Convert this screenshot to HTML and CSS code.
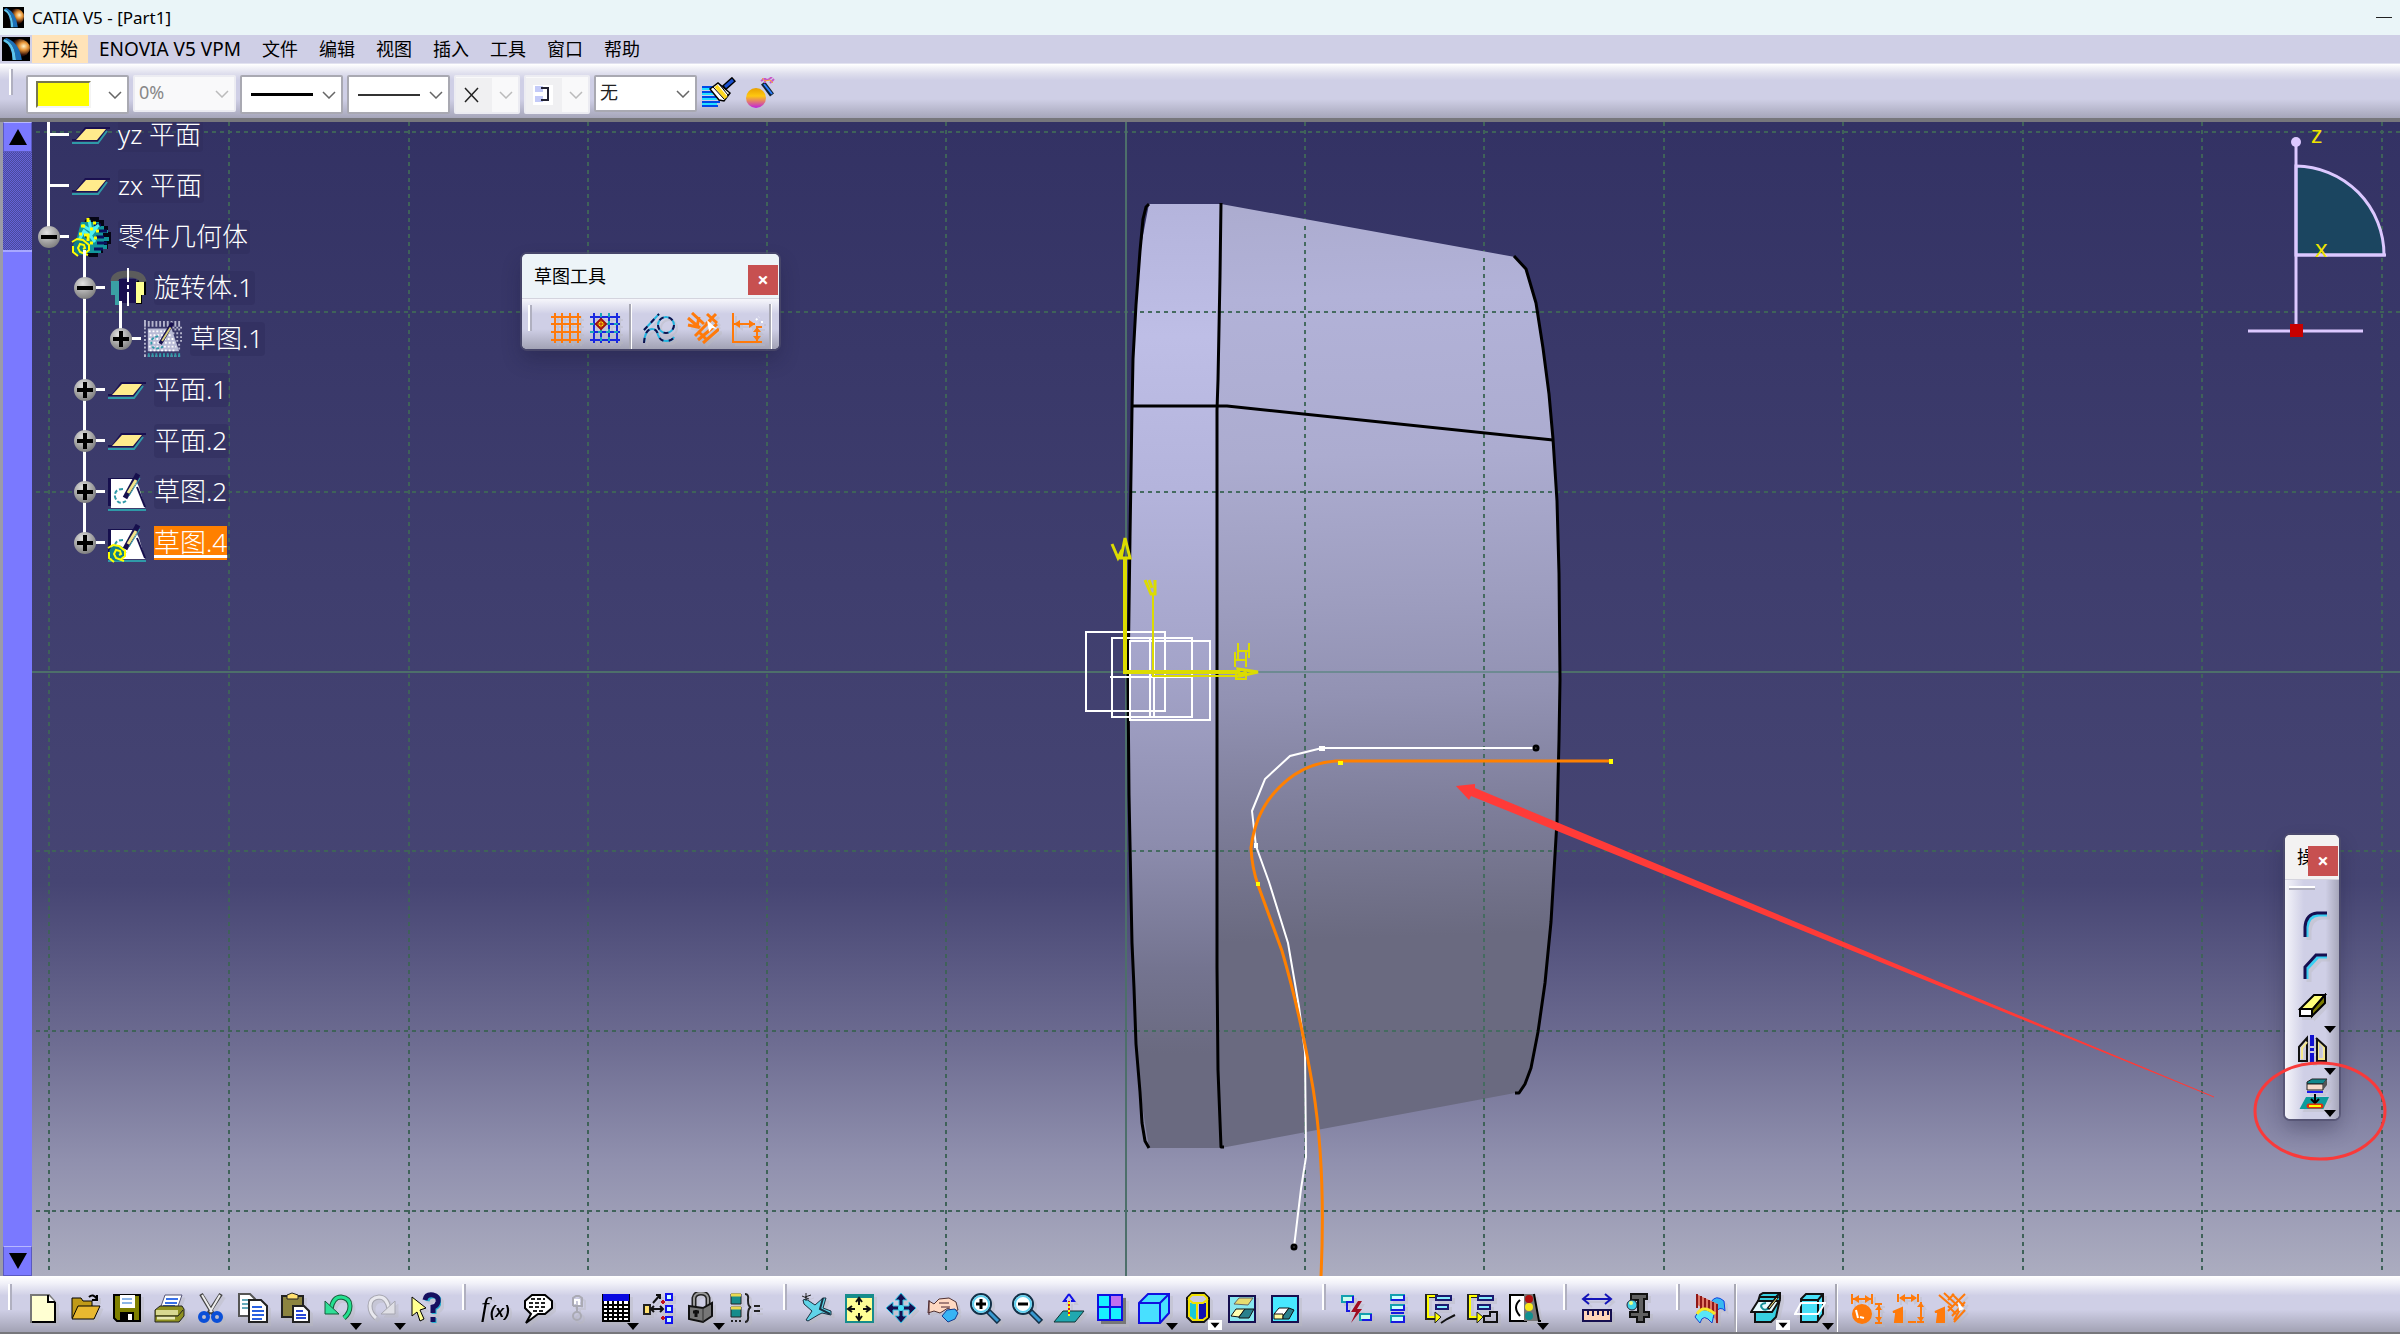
FILE: index.html
```html
<!DOCTYPE html>
<html lang="zh-CN">
<head>
<meta charset="utf-8">
<title>CATIA V5 - [Part1]</title>
<link rel="stylesheet" href="styles.css">
</head>
<body>
<svg class="defs" aria-hidden="true">
  <defs>
    <radialGradient id="flare" cx=".7" cy=".4" r=".6"><stop offset="0" stop-color="#fff3c8"/><stop offset=".35" stop-color="#e8973a"/><stop offset=".8" stop-color="#3a1408"/><stop offset="1" stop-color="#050510"/></radialGradient>
    <linearGradient id="orb" x2="0" y2="1"><stop offset="0" stop-color="#e8a000"/><stop offset=".4" stop-color="#ffc810"/><stop offset="1" stop-color="#c020e0"/></linearGradient>
    <linearGradient id="band" gradientUnits="userSpaceOnUse" x1="0" y1="204" x2="0" y2="1148"><stop offset="0" stop-color="#b4b4dc"/><stop offset=".14" stop-color="#bebee6"/><stop offset=".3" stop-color="#b4b4dc"/><stop offset=".5" stop-color="#a3a3c8"/><stop offset=".68" stop-color="#8c8cad"/><stop offset=".81" stop-color="#747490"/><stop offset=".9" stop-color="#6a6a80"/><stop offset="1" stop-color="#6a6a80"/></linearGradient>
    <linearGradient id="cone" gradientUnits="userSpaceOnUse" x1="0" y1="220" x2="30" y2="1148"><stop offset="0" stop-color="#aaaacd"/><stop offset=".13" stop-color="#b2b2d8"/><stop offset=".3" stop-color="#acacd0"/><stop offset=".45" stop-color="#9e9ec0"/><stop offset=".56" stop-color="#9292b3"/><stop offset=".69" stop-color="#7d7d99"/><stop offset=".82" stop-color="#6a6a80"/><stop offset="1" stop-color="#6a6a80"/></linearGradient>
    <symbol id="logo" viewBox="0 0 24 24" preserveAspectRatio="none"><path fill="#000" d="M0 0h24v24H0z"/><circle cx="15" cy="11" r="9" fill="url(#flare)"/><path d="M2 2q9 4 10 21h5Q15 6 4 1z" fill="#1b6fb8"/><path d="M2 2q9 4 10 21H9Q9 8 1 4z" fill="#5cc4ee"/></symbol>
    <symbol id="plane" viewBox="0 0 38 18"><path fill="#1a1050" d="M13 1h25v2h-3l-9 12H0v-2h4z"/><path fill="#ffeb8c" d="M14 3h20L25 14H4z"/><path d="M0 17h26l9-12" fill="none" stroke="#2f9aa8" stroke-width="2"/></symbol>
    <symbol id="sketch" viewBox="0 0 38 38"><path fill="#160f4d" d="M0 5h28v28H0z"/><path fill="#fff" d="M3 6h24l4 8 6 21H3z"/><path d="M29 14l8 20" stroke="#160f4d" stroke-width="2"/><path d="M15 16q-9 0-8 8 3 9 11 4" fill="none" stroke="#2f9aa8" stroke-width="2" stroke-dasharray="4 2"/><path d="M30 1L17 25" stroke="#160f4d" stroke-width="5"/><path d="M28 7l-8 13" stroke="#f2e68a" stroke-width="3"/><path d="M32 5L21 23" stroke="#2f9aa8" stroke-width="1"/><path d="M0 37h38" stroke="#2f9aa8" stroke-width="2"/></symbol>
    <symbol id="gear" viewBox="0 0 20 20"><circle cx="10" cy="10" r="8" fill="#117f88"/><path d="M1 5l5-3 6 1 6 5v5l-5 4M17 18l-8-3-2-4 2-4 4 1 1 3-2 1M2 9v6l5 4" fill="none" stroke="#ff0" stroke-width="2"/></symbol>
    <symbol id="grid5" viewBox="0 0 32 32"><path d="M5 1v30M12 1v30M20 1v30M28 1v30M1 5h30M1 12h30M1 20h30M1 28h30"/></symbol>
    <symbol id="drop" viewBox="0 0 12 8"><path d="M0 1h12L6 8z"/></symbol>
  </defs>
</svg>

<header class="titlebar">
  <svg class="titlebar-logo"><use href="#logo"/></svg>
  <h1>CATIA V5 - [Part1]</h1>
  <button class="minimize" aria-label="最小化"></button>
</header>

<nav class="menubar">
  <svg class="menubar-logo"><use href="#logo"/></svg>
  <button class="active">开始</button><button class="latin">ENOVIA V5 VPM</button><button>文件</button><button>编辑</button><button>视图</button><button>插入</button><button>工具</button><button>窗口</button><button>帮助</button>
</nav>

<section class="properties" aria-label="图形属性">
  <span class="grip"></span>
  <div class="combo"><span class="swatch"></span><select aria-label="颜色"><option></option></select></div>
  <div class="combo short disabled"><select aria-label="透明度" disabled><option>0%</option></select></div>
  <div class="combo"><span class="stroke thick"></span><select aria-label="线宽"><option></option></select></div>
  <div class="combo"><span class="stroke"></span><select aria-label="线型"><option></option></select></div>
  <div class="combo narrow disabled"><svg class="mark" viewBox="0 0 36 34"><path d="M9 10l13 14M22 10L9 24" stroke="#222" stroke-width="1.5"/></svg><select aria-label="点符号" disabled><option></option></select></div>
  <div class="combo narrow disabled"><svg class="mark" viewBox="0 0 36 34"><path fill="#fff" d="M7 7h20v20H7z"/><path fill="#c3caf8" d="M9 8h8v6H9zM9 18h8v6H9z"/><path d="M15 10h7v12h-7" fill="none" stroke="#223" stroke-width="2"/></svg><select aria-label="渲染样式" disabled><option></option></select></div>
  <div class="combo short"><select aria-label="图层"><option>无</option></select></div>
  <div class="painters">
    <button aria-label="画笔"><svg viewBox="0 0 36 32"><path d="M1 10h15M1 15h13M1 20h16M1 25h18M1 29h16" stroke="#0048e8" stroke-width="2"/><path d="M1 12h13M1 17h12M1 22h15M1 27h15" stroke="#25e0ff" stroke-width="2"/><path fill="#fff" stroke="#000" stroke-width="1.5" d="M9 12l8-6 12 10-6 8-5-1z"/><path d="M15 9l10 12" stroke="#ffd820" stroke-width="4"/><path d="M12 10l11 12M18 7l9 11" stroke="#000"/><path d="M23 11L33 2" stroke="#000" stroke-width="6"/><path d="M24 10l8-7" stroke="#1a50d0" stroke-width="3"/></svg></button>
    <button aria-label="图形属性向导"><svg viewBox="0 0 36 32"><circle cx="11" cy="21" r="10" fill="url(#orb)"/><path d="M18 6l9 12" stroke="#123" stroke-width="5"/><path d="M19 7l8 10" stroke="#2d7fff" stroke-width="2"/><path d="M16 4l3-2 4 1 4-3M25 6l4-4M20 1v5" stroke="#c858c8" stroke-width="2" fill="none"/><path d="M17 1l3 3 5-1 3 3" stroke="#ffb030" fill="none"/></svg></button>
  </div>
</section>

<main class="viewport">
  <div class="scrollbar" aria-hidden="true">
    <button tabindex="-1"><svg viewBox="0 0 18 16"><path d="M9 0l9 16H0z"/></svg></button>
    <div class="track"><div class="thumb"></div></div>
    <button tabindex="-1"><svg viewBox="0 0 18 16"><path d="M0 0h18L9 16z"/></svg></button>
  </div>
  <div class="canvas">
    <svg class="scene" viewBox="32 122 2368 1154" preserveAspectRatio="xMinYMin slice">
      <g fill="none" stroke="#3f6259" stroke-width="2" stroke-dasharray="4 4">
        <path d="M49 122v1150M229 122v1150M409 122v1150M588 122v1150M767 122v1150M946 122v1150M1664 122v1150M1843 122v1150M2023 122v1150M2202 122v1150M2382 122v1150M1305 122v1150M1484 122v1150"/>
        <path d="M36 132H2400M36 312H2400M36 492H2400M36 851H2400M36 1031H2400M36 1211H2400"/>
      </g>
      <path d="M32 672H2400M1126 122V1276" stroke="#4d6f6a" stroke-width="2"/>
      <path fill="url(#band)" d="M1149 204H1221L1218 380 1217 700 1218 1070 1221 1148H1149L1140 1092 1134 988 1129 795 1128 680 1130 537 1133 359 1140 251z"/>
      <path fill="url(#cone)" d="M1221 204L1515 257 1526 269 1536 303 1543 348 1549 394 1553 439 1557 501 1560 680 1557 821 1551 922 1545 983 1538 1032 1531 1068 1519 1093 1515 1093 1221 1148 1218 1070 1217 700 1218 380z"/>
      <path d="M1132 672H1560" stroke="#6d8a92" stroke-width="2"/>
      <g fill="none" stroke="#456b60" stroke-width="2" stroke-dasharray="4 4">
        <path d="M1305 226v906M1484 258v842M1132 312H1536M1132 492H1556M1132 851H1556M1136 1031H1538"/>
      </g>
      <g fill="none" stroke="#000" stroke-width="3" stroke-linejoin="round">
        <path d="M1149 204L1146 207 1143 219 1140 251 1136 305 1133 359 1132 409 1130 537 1128 680 1129 795 1132 943 1134 988 1136 1044 1140 1092 1142 1123 1145 1141 1149 1148"/>
        <path d="M1221 203L1220 276 1218 380 1217 410V967L1218 1070 1221 1147H1224"/>
        <path d="M1514 256L1526 269 1536 303 1543 348 1549 394 1553 439 1557 501 1559 573 1560 680 1559 740 1557 821 1551 922 1545 983 1538 1032 1531 1068 1525 1084 1519 1093H1515"/>
        <path d="M1132 406H1227L1553 440"/>
      </g>
      <g fill="none" stroke="#fff" stroke-width="2">
        <path d="M1086 632h79v79h-79zM1112 638h80v79h-80zM1130 641h80v79h-80zM1150 638v79M1154 638v79M1110 677h82"/>
        <path d="M1536 748H1322L1290 756 1265 779 1252 811 1256 846 1269 882 1288 943 1299 1007 1305 1052 1306 1157 1301 1189 1294 1247"/>
      </g>
      <path d="M1319 746h6v5h-6zM1254 843h4v5h-4z" fill="#fff"/>
      <path d="M1611 761H1336Q1300 763 1274 793 1255 815 1251 848 1252 868 1258 885L1282 951Q1300 1012 1313 1088 1326 1170 1321 1276" fill="none" stroke="#ff8000" stroke-width="3"/>
      <path d="M1609 759h4v5h-4zM1338 761h5v4h-5zM1256 882h4v4h-4z" fill="#ff0"/>
      <g fill="none" stroke="#000" stroke-width="3"><circle cx="1536" cy="748" r="2"/><circle cx="1294" cy="1247" r="2"/></g>
      <g fill="none" stroke="#dcdc00">
        <path d="M1125 558V672H1240" stroke-width="4"/>
        <path d="M1125 538l-4 20h9zM1112 544l6 14 4-8M1238 669l20 3-18 4zM1236 677l10-5" stroke-width="3"/>
        <path d="M1153 594V676H1235M1236 673h10v6h-10z" stroke-width="2"/>
        <path d="M1145 580l6 14h4V580M1149 580l3 8" stroke-width="3"/>
        <path d="M1238 643v18M1249 643v15M1238 651h11M1235 652v15M1246 652v15M1235 660h11" stroke-width="2"/>
      </g>
      <g fill="none" stroke="#dcc8ff" stroke-width="3">
        <path d="M2296 166A89 89 0 0 1 2384 255H2296z" fill="#1b4560"/>
        <path d="M2296 142V330M2248 331H2363M2296 255h90"/>
      </g>
      <circle cx="2296" cy="142" r="5" fill="#dcc8ff"/>
      <path d="M2290 324h13v13h-13z" fill="#c80000"/>
      <g class="axis-name"><text x="2311" y="143">z</text><text x="2315" y="257">x</text></g>
      <path fill="#ff3b38" d="M1456 786L1475 784 1475 788 1820 932 2214 1097 1818 937 1471 796 1469 800z"/>
      <path d="M1474 790L2214 1097" stroke="#ff3b38"/>
    </svg>

    <ul class="tree">
      <li><div class="row leaf"><i class="tick"></i><svg class="flat"><use href="#plane"/></svg><span>yz 平面</span></div></li>
      <li><div class="row leaf"><i class="tick"></i><svg class="flat"><use href="#plane"/></svg><span>zx 平面</span></div></li>
      <li><div class="row"><button class="node minus" aria-label="折叠"></button><i class="tick"></i><svg viewBox="0 0 38 40"><path d="M13 3l5-3h9v3h5v6h4v6h3v12h-3v5h-5v4h-5v4h-9L8 30z" fill="#050515"/><path d="M9 5h18v4h5v4h4v3h-5v4h6v4h-5v4h3v4h-6v4H12L4 24z" fill="#12969c"/><path d="M22 8h7M26 14h9M24 20h8M25 26h10M22 32h9" stroke="#0a1060" stroke-width="3"/><path d="M10 8l8 5 7-3-7 9-6-5-5 9M17 3l2 11 8-6M17 17l6 8" stroke="#4ff2f2" stroke-width="3" fill="none"/><path d="M16 1v4M9 9h4M21 6h3M24 14h3M7 17h3M18 12h3M12 18h4v6M22 21h3M18 26h3" stroke="#ff0" stroke-width="3"/><svg x="-1" y="20" width="20" height="20"><use href="#gear"/></svg></svg><span>零件几何体</span></div>
        <ul>
          <li><div class="row"><button class="node minus" aria-label="折叠"></button><i class="tick"></i><svg viewBox="0 0 38 40"><path d="M28 14V36h6V27h4V13q0-3-3-5z" fill="#000"/><path d="M6 14Q6 6 20 6T35 14" fill="none" stroke="#5c5c5c" stroke-width="7"/><path d="M3 13h9v24H7V27H3z" fill="#3aa0a4"/><path d="M11 11h17v24H11z" fill="#1a1050"/><path d="M28 14h8v13h-3v8h-5z" fill="#ffff90"/><path d="M20 0v40" stroke="#fff" stroke-width="2" stroke-dasharray="14 3 4 3"/></svg><span>旋转体.1</span></div>
            <ul>
              <li><div class="row"><button class="node plus" aria-label="展开"></button><i class="tick"></i><svg viewBox="0 0 40 40"><path d="M0 2h40M0 4h40M0 6h40M30 8h10M32 10h8M30 14h10M34 18h6M34 22h6M36 26h4M36 30h4M0 38h40" stroke="#b4b4cc" stroke-width="2" stroke-dasharray="2 2"/><path d="M1 0v40" stroke="#b4b4cc" stroke-width="2" stroke-dasharray="2 2"/><path d="M4 9h25l8 24H4z" fill="#b9bbd6"/><path d="M5 12h24M6 16h24M5 20h26M6 24h27M5 28h29M6 32h28" stroke="#fff" stroke-width="2" stroke-dasharray="2 2"/><path d="M15 17q-9 2-7 9t12 2" stroke="#2f9aa8" stroke-width="2" stroke-dasharray="3 2" fill="none"/><path d="M30 3L17 25" stroke="#160f4d" stroke-width="4"/><path d="M28 8l-9 14" stroke="#d8d080" stroke-width="2"/><path d="M4 37h34" stroke="#2f9aa8" stroke-width="4" stroke-dasharray="2 2"/></svg><span>草图.1</span></div></li>
            </ul>
          </li>
          <li><div class="row"><button class="node plus" aria-label="展开"></button><i class="tick"></i><svg class="flat"><use href="#plane"/></svg><span>平面.1</span></div></li>
          <li><div class="row"><button class="node plus" aria-label="展开"></button><i class="tick"></i><svg class="flat"><use href="#plane"/></svg><span>平面.2</span></div></li>
          <li><div class="row"><button class="node plus" aria-label="展开"></button><i class="tick"></i><svg><use href="#sketch"/></svg><span>草图.2</span></div></li>
          <li><div class="row"><button class="node plus" aria-label="展开"></button><i class="tick"></i><svg viewBox="0 0 38 38"><use href="#sketch"/><svg x="-1" y="19" width="20" height="20"><use href="#gear"/></svg></svg><span class="selected">草图.4</span></div></li>
        </ul>
      </li>
    </ul>

    <section class="palette sketch-tools" aria-label="草图工具">
      <header><h2>草图工具</h2><button class="close" aria-label="关闭">×</button></header>
      <div class="tools">
        <span class="grip"></span>
        <button aria-label="网格"><svg viewBox="0 0 32 32" stroke="#ff7a0a" stroke-width="2"><use href="#grid5"/></svg></button>
        <button aria-label="点对齐"><svg viewBox="0 0 32 32" stroke="#1a28e0" stroke-width="2"><use href="#grid5"/><path d="M1 12h30M1 20h30M20 1v30M12 1v30" stroke="#18a8b8" stroke-dasharray="4 4"/><path d="M12 7l5 5-5 5-5-5z" fill="#ff0" stroke="#a01010"/><path d="M12 9v6M9 12h6" stroke="#c01010" stroke-width="1"/></svg></button>
        <span class="rule"></span>
        <button aria-label="构造元素"><svg viewBox="0 0 32 32" fill="none" stroke="#24b4e0" stroke-width="2"><circle cx="23" cy="13" r="8"/><path d="M1 18L16 2M1 31q1-14 8-14 5 0 6 6 2 6 8 6t8-4"/><g stroke="#12104c" stroke-dasharray="5 5"><circle cx="23" cy="13" r="8"/><path d="M1 18L16 2M1 31q1-14 8-14 5 0 6 6 2 6 8 6t8-4"/></g></svg></button>
        <button aria-label="几何约束"><svg viewBox="0 0 32 32" fill="none" stroke="#ff7a0a" stroke-width="3"><path d="M1 6l12 10M5 1l12 11M1 13l9 2 2-10M8 24L24 8M11 28L30 12M16 31l16-14M20 2l10 9M29 2L19 12M12 20l8 8"/><path d="M20 8l2 12 3-4 5 1z" fill="#fff" stroke="none"/></svg></button>
        <button aria-label="尺寸约束"><svg viewBox="0 0 32 32" fill="none" stroke="#ff7a0a" stroke-width="2"><path d="M2 1v29h24v-4M2 12h22M26 14v14M26 15h5M26 30h5"/><path d="M3 12l6-4v8zM24 12l-6-4v8zM26 15l-4 5h8zM26 29l-4-5h8z" fill="#ff7a0a" stroke="none"/><path d="M25 8l3-3M31 9v3" stroke="#fff" stroke-dasharray="2 2"/></svg></button>
        <span class="rule"></span>
      </div>
    </section>

    <section class="palette operations" aria-label="操作">
      <header><h2>操作</h2><button class="close" aria-label="关闭">×</button></header>
      <div class="tools">
        <span class="grip"></span>
        <button aria-label="圆角"><svg viewBox="0 0 32 32" fill="none"><path d="M10 28V19Q11 7 22 6h8" stroke="#38cff2" stroke-width="3"/><path d="M8 28V18Q9 5 20 4h10" stroke="#160f50" stroke-width="3"/></svg></button>
        <button aria-label="倒角"><svg viewBox="0 0 32 32" fill="none"><path d="M10 28V18L21 6h9" stroke="#38cff2" stroke-width="3"/><path d="M8 28V16L19 4h11" stroke="#160f50" stroke-width="3"/></svg></button>
        <button aria-label="修剪"><svg viewBox="0 0 32 32" stroke="#000" stroke-width="2"><path fill="#ffff78" d="M3 16L17 2h11L15 17z"/><path fill="#fff" d="M3 16h12v7H3z"/><path fill="#7b7b00" d="M15 17L28 2v8L15 23z"/></svg><svg class="more"><use href="#drop"/></svg></button>
        <button aria-label="镜像"><svg viewBox="0 0 32 32" fill="none"><path d="M2 26V12l8-9v23z" stroke="#111" stroke-width="2"/><path d="M5 24V13l5-6M21 24V5l6 7v12z" stroke="#f5e88a" stroke-width="2"/><path d="M19 3l10 9v14h-9V3" stroke="#111" stroke-width="2"/><path d="M15 0v28" stroke="#1010d0" stroke-width="4" stroke-dasharray="11 2 3 2"/></svg><svg class="more"><use href="#drop"/></svg></button>
        <button aria-label="投影三维元素"><svg viewBox="0 -2 32 32"><path d="M10 3l5-3h15l-4 5H10z" fill="#12888c" stroke="#222"/><path d="M10 5h16v6H10z" fill="#f8dccc" stroke="#222"/><path d="M26 5l4-5v6l-4 5z" fill="#555"/><path d="M10 13h16" stroke="#1a1aee" stroke-width="2"/><path d="M9 18h23l-6 13H2z" fill="#0c9c9c"/><path d="M18 15v8M14 20l4 4 4-4" stroke="#000" stroke-width="2" fill="none"/><path d="M12 27h12" stroke="#e03010" stroke-width="5" stroke-linecap="round"/><path d="M12 27h12" stroke="#ff0" stroke-width="2"/></svg><svg class="more"><use href="#drop"/></svg></button>
      </div>
    </section>

    <svg class="callout" viewBox="0 0 134 100"><ellipse cx="67" cy="50" rx="65" ry="48"/></svg>
  </div>
</main>

<footer class="toolbar">
  <span class="grip"></span>
  <button aria-label="新建"><svg viewBox="0 0 32 32"><path d="M4 3h18l6 7v20H4z" fill="#ffffd2" stroke="#777" stroke-width="2"/><path d="M28 10v20H5" stroke="#000" stroke-width="2" fill="none"/><path d="M21 3v7h7" fill="#fff" stroke="#000" stroke-width="2"/></svg></button>
  <button aria-label="打开"><svg viewBox="0 0 32 32"><path d="M3 26V6h9l2 3h9v7" fill="#c09a18" stroke="#000"/><path d="M3 27l6-13h22l-6 13z" fill="#e8b830" stroke="#000"/><path d="M20 5q4-4 8 2m0-4v5h-5" fill="none" stroke="#000" stroke-width="2"/></svg></button>
  <button aria-label="保存"><svg viewBox="0 0 32 32"><path d="M3 3h26v26H6l-3-3z" fill="#7f8000" stroke="#000" stroke-width="2"/><path d="M9 3h15v13H9z" fill="#fff"/><path d="M11 7h10M11 11h10" stroke="#8db6e8" stroke-width="2"/><path d="M9 20h14v9H9z" fill="#000"/><path d="M17 22h4v6h-4z" fill="#fff"/></svg></button>
  <button aria-label="打印"><svg viewBox="0 0 32 32"><path d="M12 3h17l-5 14H7z" fill="#fff" stroke="#557"/><path d="M13 7h12M12 11h12M10 14h12" stroke="#3870e8" stroke-width="2"/><path d="M2 18l5-4h22l2 3v7l-5 6H2z" fill="#8e9020" stroke="#222"/><path d="M3 18h22v5H3z" fill="#d8d890"/><path d="M4 26h18" stroke="#e8e8b0" stroke-width="3"/><path d="M2 24h23l5-6" stroke="#222" fill="none"/></svg></button>
  <button aria-label="剪切"><svg viewBox="0 0 32 32"><path d="M6 2l12 20M26 2L13 22" stroke="#444" stroke-width="4"/><path d="M7 3l10 17M25 3L15 20" stroke="#eee" stroke-width="2"/><g fill="none" stroke="#0a4fd8" stroke-width="4"><circle cx="9" cy="25" r="4"/><circle cx="22" cy="25" r="4"/></g></svg></button>
  <button aria-label="复制"><svg viewBox="0 0 32 32" stroke-width="2"><path d="M2 2h11l5 5v17H2z" fill="#fff" stroke="#555"/><path d="M5 8h8M5 12h8M5 16h8" stroke="#6ab"/><path d="M12 8h12l6 6v16H12z" fill="#fff" stroke="#222"/><path d="M15 15h10M15 19h12M15 23h12M15 27h10" stroke="#2860e0"/></svg></button>
  <button aria-label="粘贴"><svg viewBox="0 0 32 32"><path d="M3 4h21v21H3z" fill="#8c8440" stroke="#222" stroke-width="2"/><path d="M8 3l5-2 6 2v4H8z" fill="#ffe070" stroke="#222"/><path d="M14 14h11l5 5v11H14z" fill="#fff" stroke="#222" stroke-width="2"/><path d="M17 19h7M17 23h10M17 26h10" stroke="#2848d8" stroke-width="2"/></svg></button>
  <button class="wide" aria-label="撤消"><svg viewBox="0 0 32 32"><path d="M9 17Q11 5 19 5q9 1 9 9 0 7-6 12" fill="none" stroke="#175a3a" stroke-width="5"/><path d="M9 17Q11 5 19 5q9 1 9 9 0 7-6 12" fill="none" stroke="#24e090" stroke-width="3"/><path d="M3 9v13h14z" fill="#30e098" stroke="#175a3a"/></svg><svg class="more"><use href="#drop"/></svg></button>
  <button class="wide" aria-label="重做"><svg viewBox="0 0 32 32"><path d="M23 17Q21 5 13 5 4 6 4 14q0 7 6 12" fill="none" stroke="#a6a6b0" stroke-width="5"/><path d="M23 17Q21 5 13 5 4 6 4 14q0 7 6 12" fill="none" stroke="#e8e8ee" stroke-width="3"/><path d="M29 9v13H15z" fill="#e0e0e6" stroke="#a6a6b0"/></svg><svg class="more"><use href="#drop"/></svg></button>
  <button aria-label="这是什么"><svg viewBox="0 0 32 32"><path d="M18 9q1-6 7-5 6 1 5 7-1 4-5 5v6M25 26v5" fill="none" stroke="#28b0d0" stroke-width="5"/><path d="M16 8q1-6 8-5 6 1 5 7-1 4-5 5v6M24 25v5" fill="none" stroke="#160f60" stroke-width="5"/><path d="M3 5l14 11-6 2 4 9-4 2-3-9-5 4z" fill="#ffff90" stroke="#000"/></svg></button>

  <span class="grip"></span>
  <button aria-label="公式"><svg viewBox="0 0 32 32"><text x="1" y="24" class="formula-f">f</text><text x="10" y="25" class="formula-x">(x)</text></svg></button>
  <button aria-label="注释"><svg viewBox="0 0 32 32"><path d="M10 3h13l7 6v7l-7 6h-7L4 31l5-9-6-6V9z" fill="#fff" stroke="#000" stroke-width="2"/><path d="M9 7h14M7 11h18M7 15h18M11 19h10" stroke="#222" stroke-width="2" stroke-dasharray="4 2"/></svg></button>
  <button class="slim" aria-label="链接"><svg viewBox="0 0 32 32" fill="none" stroke="#aaaab4" stroke-width="2"><path d="M12 14V6l3-2h3l3 2v8h-9m4 0v6"/><circle cx="16" cy="24" r="4"/><path d="M14 12V8h4v5" stroke="#fff"/></svg></button>
  <button aria-label="设计表"><svg viewBox="0 0 32 32"><path d="M3 3h26v26H3z" fill="#fff" stroke="#000" stroke-width="2"/><path d="M3 2h26v7H3z" fill="#0808e0"/><path d="M8 9v20M13 9v20M18 9v20M23 9v20M3 13h26M3 17h26M3 21h26M3 25h26" stroke="#000" stroke-width="2"/></svg><svg class="more"><use href="#drop"/></svg></button>
  <button aria-label="知识检查器"><svg viewBox="0 0 32 32" fill="none"><path d="M2 13h6v9H2z" fill="#ffe070" stroke="#222" stroke-width="2"/><path d="M24 2h6v6h-6zM24 14h6v6h-6zM24 25h6v6h-6z" fill="#cff" stroke="#1010f0" stroke-width="2"/><path d="M11 11l7-8m0 4V3h-4M10 17h11m-3-3l3 3-3 3M12 14l-3 3 3 3" stroke="#111" stroke-width="2"/><path d="M19 10h4M21 8v4M19 26h4M21 24v4" stroke="#c01020" stroke-width="2"/></svg></button>
  <button class="wide" aria-label="锁定"><svg viewBox="0 0 32 32"><path d="M9 15V6q1-5 7-5t7 5v9" fill="none" stroke="#222" stroke-width="5"/><path d="M9 15V6q1-5 7-5t7 5v9" fill="none" stroke="#999" stroke-width="2"/><path d="M4 14l14 2 9-5v13l-9 6-14-3z" fill="#777" stroke="#111" stroke-width="2"/><path d="M18 16v14" stroke="#333"/><path d="M11 18v7M8 20h6" stroke="#111" stroke-width="3"/></svg><svg class="more"><use href="#drop"/></svg></button>
  <button class="wide" aria-label="等效尺寸"><svg viewBox="0 0 32 32" fill="none"><path d="M2 2h10v10H2zM2 15h10v10H2z" fill="#168c8c" stroke="#222"/><path d="M2 3h10M2 16h10" stroke="#e8d850" stroke-width="3"/><path d="M16 2q4 0 3 6 0 7 3 7-3 1-3 8 1 7-3 7" stroke="#222" stroke-width="2"/><path d="M25 14h6M25 19h6" stroke="#222" stroke-width="2"/><path d="M2 29h10" stroke="#222" stroke-width="2" stroke-dasharray="2 2"/></svg></button>

  <span class="grip"></span>
  <button aria-label="飞行模式"><svg viewBox="0 0 32 32"><path d="M2 8l3-1 9 6 8-7h3l-3 10 8 3v4l-9-2-4 2-10 6-2-1 6-9-8-7z" fill="#5fd4e8" stroke="#1a3040"/><path d="M22 6l-3 11 10 5" stroke="#1a3040" fill="none" stroke-width="2"/><path d="M1 4l7 3M5 1v8M4 5l6-2" stroke="#222"/></svg></button>
  <button aria-label="全部适应"><svg viewBox="0 0 32 32" fill="none"><path d="M3 3h27v27H3z" fill="#ffff96" stroke="#168c8c" stroke-width="2"/><path d="M2 4h29" stroke="#168c8c" stroke-width="4"/><path d="M16 13V7m-3 3l3-4 3 4M16 21v6m-3-3l3 4 3-4M12 17H6m3-3l-4 3 4 3M20 17h6m-3-3l4 3-4 3" stroke="#111" stroke-width="2"/></svg></button>
  <button aria-label="平移"><svg viewBox="0 0 32 32"><path d="M16 1l6 7h-4v6h6v-4l7 6-7 7v-5h-6v6h4l-6 7-6-7h4v-6H8v5l-7-7 7-6v4h6V8h-4z" fill="#160f50" stroke="#34c8e8"/><circle cx="16" cy="16" r="3" fill="#4ce0f8"/></svg></button>
  <button aria-label="旋转"><svg viewBox="0 0 32 32"><path d="M2 9l5 3 5-5 10-1 7 4 2 8-5 1-5-3-8 5-6-2-6 2z" fill="#ffd9c2" stroke="#503030"/><path d="M2 8v15M12 11h10M14 15h9" stroke="#4a2430" fill="none"/><path d="M15 24l5-6 8-1 3 4-3 6-7 3z" fill="#38b4f4" stroke="#123a90"/></svg></button>
  <button aria-label="放大"><svg viewBox="0 0 32 32"><path d="M19 19l11 11" stroke="#123048" stroke-width="6"/><path d="M20 20l9 9" stroke="#3898d0" stroke-width="3"/><circle cx="12" cy="12" r="10" fill="#fff" stroke="#123048" stroke-width="2"/><circle cx="12" cy="12" r="8" fill="none" stroke="#60d0f0" stroke-width="2"/><path d="M7 12h10M12 7v10" stroke="#000" stroke-width="3"/></svg></button>
  <button aria-label="缩小"><svg viewBox="0 0 32 32"><path d="M19 19l11 11" stroke="#123048" stroke-width="6"/><path d="M20 20l9 9" stroke="#3898d0" stroke-width="3"/><circle cx="12" cy="12" r="10" fill="#fff" stroke="#123048" stroke-width="2"/><circle cx="12" cy="12" r="8" fill="none" stroke="#60d0f0" stroke-width="2"/><path d="M7 12h10" stroke="#000" stroke-width="3"/></svg></button>
  <button aria-label="法线视图"><svg viewBox="0 0 32 32" fill="none"><path d="M10 19h21L22 30H1z" fill="#20a8b0" stroke="#133"/><path d="M16 24V9" stroke="#d82020" stroke-width="2"/><path d="M16 24V9" stroke="#ff0" stroke-width="2" stroke-dasharray="2 2"/><path d="M16 2l5 7h-3M16 2l-5 7h3" stroke="#1010e8" stroke-width="2"/></svg></button>
  <button aria-label="多视图"><svg viewBox="0 0 32 32"><path d="M6 6h25v26H6z" fill="#777"/><path d="M3 3h24v25H3z" fill="#18f0ff" stroke="#1010e0" stroke-width="2"/><path d="M16 4h10v11H16z" fill="#c070f0"/><path d="M15 3v25M3 15h24" stroke="#1010e0" stroke-width="2"/></svg></button>
  <button class="wide" aria-label="等轴测视图"><svg viewBox="0 0 32 32"><path d="M1 11l9-9h21v19l-9 10H1zM1 11h21v20M22 11l9-9" fill="#48e0ff" stroke="#1010e0" stroke-width="2"/></svg><svg class="more"><use href="#drop"/></svg></button>
  <button class="wide" aria-label="着色"><svg viewBox="0 0 32 32"><path d="M5 6l5-5h12l5 5v19l-5 5H10l-5-5z" fill="#c8c8e0" stroke="#111" stroke-width="2"/><path d="M7 11h8v16H9l-2-3z" fill="#18c8d8"/><path d="M17 11h9v13l-4 4h-5z" fill="#1010b0"/><path d="M6 7l5 4h10l5-4M15 11v18M8 25l3 3h10l4-3V6l-3-3H10L7 6v19" fill="none" stroke="#f0e000" stroke-width="2"/></svg><svg class="more boxed"><use href="#drop"/></svg></button>
  <button class="wide" aria-label="隐藏/显示"><svg viewBox="0 0 32 32"><path d="M3 4h26v26H3z" fill="#88e8f0" stroke="#160f50" stroke-width="2"/><path d="M8 12l5-6h14l-5 7z" fill="#e8dc70" stroke="#666"/><path d="M5 24l5-7h9l-6 8z" fill="#ffffb0" stroke="#111"/><path d="M13 25l6-8h9l-5 9H13z" fill="#28808c" stroke="#111"/></svg></button>
  <button aria-label="交换可视空间"><svg viewBox="0 0 32 32"><path d="M3 4h26v26H3z" fill="#48e8ff" stroke="#160f50" stroke-width="2"/><path d="M5 22l5-6h10l-6 8z" fill="#fff" stroke="#111"/><path d="M5 22h9v5H5z" fill="#fffca0" stroke="#111"/><path d="M14 24l6-8 5 2-5 9h-6z" fill="#28808c" stroke="#111"/></svg></button>

  <span class="grip"></span>
  <button aria-label="更新"><svg viewBox="0 0 32 32" fill="none"><path d="M2 4h11v6H2zM20 22h11v6H20z" fill="#cfe" stroke="#12a0b0" stroke-width="2"/><path d="M13 4v6H7v9h3M31 22v6h-9" stroke="#1818e0" stroke-width="2"/><path d="M18 9l-7 11h5l-5 11 11-14h-5l5-8z" fill="#a00c20"/></svg></button>
  <button aria-label="历史树"><svg viewBox="0 0 32 32" fill="#cff" stroke-width="2"><path d="M9 3h13v5H9zM9 13h13v5H9zM9 24h13v6H9z" stroke="#12a0b0"/><path d="M9 8h13V3M9 18h13v-5M9 21h13M9 30h13v-6" stroke="#1818e0" fill="none"/></svg></button>
  <button aria-label="在前插入"><svg viewBox="0 0 32 32" fill="none"><path d="M14 4H3v22h8" stroke="#222" stroke-width="4"/><path d="M14 4H4v21h8" stroke="#ff0" stroke-width="2"/><path d="M11 20l6 5-6 6z" fill="#ff0" stroke="#222"/><path d="M12 4h15v4H12zM12 13h12v4H12z" fill="#8ef" stroke="#1a1a70" stroke-width="2"/><path d="M17 31l6-4 8-4" stroke="#111" stroke-width="2"/></svg></button>
  <button aria-label="在后插入"><svg viewBox="0 0 32 32" fill="none"><path d="M14 4H3v22h8" stroke="#222" stroke-width="4"/><path d="M14 4H4v21h8" stroke="#ff0" stroke-width="2"/><path d="M11 20l6 5-6 6z" fill="#ff0" stroke="#222"/><path d="M12 4h15v4H12zM12 13h12v4H12z" fill="#8ef" stroke="#1a1a70" stroke-width="2"/><path d="M18 30v-6h6v-4h7v10z" stroke="#111" stroke-width="2"/></svg></button>
  <button class="wide" aria-label="检查"><svg viewBox="0 0 32 32"><path d="M1 3h16v26H1z" fill="#fff" stroke="#000" stroke-width="2"/><path d="M11 8q-8 7 0 16" fill="none" stroke="#000" stroke-width="2"/><path d="M15 2h10l5 27H15z" fill="#777"/><path d="M25 2l5 27h2" stroke="#000" stroke-width="2" fill="none"/><circle cx="20" cy="7" r="4" fill="#b01010"/><circle cx="20" cy="15" r="4" fill="#f8e818"/><circle cx="20" cy="24" r="4" fill="#109090"/></svg><svg class="more"><use href="#drop"/></svg></button>

  <span class="grip"></span>
  <button aria-label="测量间距"><svg viewBox="0 0 32 32" fill="none"><path d="M2 7h28M8 2L2 7l6 5M24 2l6 5-6 5" stroke="#1414b8" stroke-width="2"/><path d="M2 18h28v11H2z" fill="#ffd4b8" stroke="#160f50" stroke-width="2"/><path d="M7 19v4M12 19v5M17 19v4M22 19v5M27 19v4" stroke="#160f50" stroke-width="2"/></svg></button>
  <button aria-label="测量元素"><svg viewBox="0 0 32 32"><path d="M8 2h16v5h-3v13h5v5h-5v5h-7v-5H7v-5h8V8H8z" fill="#606060" stroke="#111" stroke-width="2"/><circle cx="9" cy="13" r="5" fill="#40d0e8" stroke="#223"/><circle cx="8" cy="11" r="2" fill="#e8ff80"/></svg></button>

  <span class="grip"></span>
  <button aria-label="拔模分析"><svg viewBox="0 0 32 32"><path d="M17 10q5-8 13-1l1 10q-5-6-10 2" fill="#38b8f0" stroke="#1040e0"/><path d="M2 2l22 10v20L18 22 2 12z" fill="#e07868"/><path d="M3 2v14M7 4v14M11 6v14M15 8v16M19 10v16M23 12v19" stroke="#901818" stroke-width="2"/><path d="M1 25Q6 12 20 22l-2 9Q9 20 6 31z" fill="#58e8f8" stroke="#1840d0"/><path d="M3 22q6-10 18 0" stroke="#f8e828" stroke-width="3" fill="none"/></svg></button>
  <span class="rule"></span>
  <button class="wide" aria-label="草图求解"><svg viewBox="0 0 32 32"><path d="M5 30V20L10 3l3-2h17v6l-4 18-5 5z" fill="#38d0e0" stroke="#111" stroke-width="2"/><path d="M9 5h17l4-4" fill="none" stroke="#111" stroke-width="2"/><path d="M1 20L8 9h21l-7 11z" fill="#e8fbff" stroke="#111" stroke-width="2"/><path d="M16 11q-7 1-4 5t8-1" fill="none" stroke="#189098" stroke-width="2"/><path d="M28 4L18 17" stroke="#111" stroke-width="3"/><path d="M27 6l-8 10" stroke="#ffe87a"/></svg><svg class="more boxed"><use href="#drop"/></svg></button>
  <button class="wide" aria-label="按草图平面剪切零件"><svg viewBox="0 0 32 32"><path d="M7 7l5-5h17v20l-6 8H7z" fill="#48e0f8" stroke="#111" stroke-width="2"/><path d="M7 8h17l5-6M24 8v21" fill="none" stroke="#111" stroke-width="2"/><path d="M1 22L7 11h24l-7 11z" fill="none" stroke="#fff" stroke-width="2"/></svg><svg class="more"><use href="#drop"/></svg></button>
  <span class="rule"></span>
  <button aria-label="诊断"><svg viewBox="0 0 32 32" fill="none" stroke="#ff7a0a" stroke-width="2"><circle cx="12" cy="22" r="9" fill="#ff7a0a"/><path d="M2 2v10M22 2v10M3 7h18M29 12v18M25 12h7M25 31h7"/><path d="M3 7l6-4v8zM21 7l-6-4v8zM29 13l-4 5h7zM29 30l-4-5h7z" fill="#ff7a0a" stroke="none"/><path d="M6 18l2 8M10 25l4 1" stroke="#fff"/></svg></button>
  <button aria-label="尺寸"><svg viewBox="0 0 32 32" fill="none" stroke="#ff7a0a" stroke-width="2"><path d="M8 6h16M6 2v8M26 2v8M29 10v20M25 30h7M16 30h8"/><path d="M7 6l6-4v8zM25 6l-6-4v8zM29 10l-4 5h7zM29 30l-4-5h7z" fill="#ff7a0a" stroke="none"/><path d="M1 20l9-4v4zM3 30l1-8h6v3H6v2h4v3z" fill="#ff7a0a"/></svg></button>
  <button aria-label="几何"><svg viewBox="0 0 32 32" fill="none" stroke="#ff7a0a" stroke-width="2"><path d="M5 3l14 12M10 1l14 13M31 2L14 19M31 10L18 24M31 18L20 30M18 2l12 12M14 8l6-6M28 14l-8 14M14 14l8 8"/><path d="M1 20l9-4v4zM3 30l1-8h6v3H6v2h4v3z" fill="#ff7a0a"/><path d="M24 10l1 9 5-2z" fill="#fff" stroke="none"/></svg></button>
</footer>
</body>
</html>
```
FILE: styles.css
```css
* { box-sizing: border-box; }

body {
  margin: 0;
  height: 100vh;
  display: flex;
  flex-direction: column;
  overflow: hidden;
  font: 18px/26px "Noto Sans", "Noto Sans CJK SC", sans-serif;
  color: #000;
  background: #cfcfe6;
}

button {
  margin: 0;
  padding: 0;
  border: 0;
  background: none;
  font: inherit;
  color: inherit;
}

h1, h2 { margin: 0; font-weight: 400; }
svg { display: block; flex: none; }
.defs { position: absolute; width: 0; height: 0; }

/* Title bar */
.titlebar {
  flex: none;
  display: flex;
  align-items: center;
  gap: 8px;
  height: 35px;
  padding: 0 8px 0 3px;
  background: #eaf5f8;
}
.titlebar-logo { width: 21px; height: 21px; }
.titlebar h1 { flex: 1; font-size: 17px; line-height: 24px; }
.minimize { width: 16px; height: 20px; display: grid; align-items: center; }
.minimize::before { content: ""; height: 1px; background: #222; }

/* Menu bar */
.menubar {
  flex: none;
  display: flex;
  align-items: stretch;
  height: 29px;
  padding-left: 2px;
  border-bottom: 1px solid #e2e2f0;
}
.menubar-logo { width: 28px; height: 24px; margin: 2px 2px 0 0; }
.menubar button { padding: 0 10px 0 11px; white-space: nowrap; }
.menubar .active { padding: 0 10px; background: #ffe3b8; }
.menubar .latin { font-size: 19px; }

/* Shared toolbar pieces */
.grip {
  flex: none;
  width: 4px;
  height: 26px;
  border-right: 2px solid #b0b0c0;
  border-left: 2px solid #fff;
}
.rule {
  flex: none;
  align-self: stretch;
  width: 3px;
  border-left: 2px solid #a8a8b4;
  border-right: 1px solid #fff;
}
.more { position: absolute; right: 0; bottom: 0; width: 12px; height: 8px; }
.more.boxed { padding: 2px; width: 14px; height: 10px; background: #fff; }

/* Properties toolbar */
.properties {
  flex: none;
  display: flex;
  align-items: flex-start;
  gap: 4px;
  height: 58px;
  padding: 11px 0 0 9px;
  border-bottom: 4px solid #77777c;
  background: linear-gradient(#fff, #dedeed 18%, #cfcfe6 30%, #cfcfe6 65%, #a6a6ba);
}
.properties .grip { margin: -6px 9px 0 0; }
.combo {
  position: relative;
  display: flex;
  align-items: center;
  width: 103px;
  height: 39px;
  border: 2px solid #a9a9b2;
  border-radius: 2px;
  background: #fff;
}
.combo.short { height: 37px; }
.combo.narrow { width: 66px; }
.combo.disabled { border-color: #ececf2; background: #f9f9fa; }
.combo select {
  position: absolute;
  inset: 0;
  width: 100%;
  padding: 0 4px 4px 4px;
  border: 0;
  appearance: none;
  font: inherit;
  color: #222;
  background: url("data:image/svg+xml,%3Csvg xmlns='http://www.w3.org/2000/svg' width='14' height='8'%3E%3Cpath d='M1 1l6 6 6-6' fill='none' stroke='%23666' stroke-width='1.5'/%3E%3C/svg%3E") no-repeat right 5px center;
}
.combo select:disabled { opacity: 1; color: #888; background-image: url("data:image/svg+xml,%3Csvg xmlns='http://www.w3.org/2000/svg' width='14' height='8'%3E%3Cpath d='M1 1l6 6 6-6' fill='none' stroke='%23bbb' stroke-width='1.5'/%3E%3C/svg%3E"); }
.swatch { width: 55px; height: 27px; margin-left: 8px; border: 2px solid; border-color: #77774f #f4f4f4 #f4f4f4 #77774f; background: #ff0; }
.stroke { width: 62px; height: 2px; margin-left: 9px; background: #333; }
.stroke.thick { height: 3px; background: #000; }
.mark { width: 36px; height: 34px; background: #f0f0f2; fill: none; }
.painters { display: flex; gap: 8px; margin-top: 2px; }
.painters svg { width: 36px; height: 32px; }

/* 3D viewport */
.viewport { flex: 1; min-height: 0; display: flex; padding-left: 3px; background: #9b9ba8; }
.scrollbar { width: 29px; display: flex; flex-direction: column; background: #7a79ff; }
.scrollbar button { height: 30px; display: grid; place-items: center; border: 1px solid #5a59c0; border-top-color: #b8b8ff; }
.scrollbar svg { width: 18px; height: 16px; }
.track { flex: 1; }
.thumb { height: 100px; border-bottom: 2px solid #a8a8ff; background: repeating-conic-gradient(#6463d8 0 25%, #4a499c 0 50%) 0 0 / 2px 2px; }

.canvas {
  position: relative;
  flex: 1;
  min-width: 0;
  overflow: hidden;
  background: linear-gradient(#333264, #3f3e6e 40%, #464573 66%, #54537e 71%, #6e6d92 80%, #9090ae 90%, #acadc0);
}
.scene { position: absolute; inset: 0; width: 100%; height: 100%; }
.axis-name { font: 24px "Noto Sans", sans-serif; fill: #f0e400; }

/* Specification tree */
.tree { position: absolute; left: 6px; top: -13px; color: #fff; font: 300 26px/30px "Noto Sans", "Noto Sans CJK SC", sans-serif; }
.tree, .tree ul { margin: 0; padding: 0; list-style: none; }
.tree ul { position: relative; margin-left: 36px; }
.tree::before, .tree ul::before { content: ""; position: absolute; left: 9px; width: 3px; top: 0; bottom: 25px; background: #fff; }
.tree::before { bottom: auto; height: 120px; }
.tree ul::before { top: -12px; }
.row { position: relative; display: flex; align-items: center; height: 51px; white-space: nowrap; }
.row svg { width: 38px; height: 40px; margin: 0 8px 0 3px; overflow: visible; }
.row svg svg { width: 20px; height: 20px; }
.row svg.flat { height: 18px; }
.row span { padding: 1px 2px 3px 0; border-radius: 4px; background: rgba(48, 46, 92, .55); }
.row .selected { padding: 1px 0 3px; border-radius: 0; background: #ff8000; text-decoration: underline; text-underline-offset: 3px; text-decoration-thickness: 3px; text-decoration-skip-ink: none; }
.tick { width: 9px; height: 3px; background: #fff; }
.leaf .tick { width: 20px; margin-left: 11px; }
.node {
  width: 22px;
  height: 22px;
  border-radius: 50%;
  background: linear-gradient(#000, #000) center / 16px 4px no-repeat, radial-gradient(circle at 40% 30%, #e2e2e2, #999 55%, #666);
}
.node.plus { background: linear-gradient(#000, #000) center / 16px 4px no-repeat, linear-gradient(#000, #000) center / 4px 16px no-repeat, radial-gradient(circle at 40% 30%, #e2e2e2, #999 55%, #666); }

/* Floating palettes */
.palette { position: absolute; border-radius: 5px; overflow: hidden; box-shadow: 0 0 0 2px rgba(80, 78, 110, .7), 0 10px 20px rgba(20, 20, 50, .3); background: #cfcfe6; }
.palette header { display: flex; align-items: center; height: 45px; padding: 0 1px 0 12px; border-bottom: 1px solid #d4d4de; background: #edf4f8; }
.palette h2 { flex: 1; min-width: 0; overflow: hidden; font-size: 18px; line-height: 26px; white-space: nowrap; }
.close { width: 30px; height: 30px; margin-top: 7px; background: #c75050; color: #fff; font-size: 20px; font-weight: 700; line-height: 30px; }
.palette button svg:first-child { width: 32px; height: 32px; }
.tools button svg:first-child, .toolbar button svg:first-child { filter: drop-shadow(3px 3px 0 rgba(185, 185, 190, .4)); }

.sketch-tools { left: 490px; top: 132px; width: 257px; }
.sketch-tools .tools { display: flex; align-items: center; height: 50px; padding: 7px 8px 0 6px; background: linear-gradient(#f6f6fb, #cfcfe6 30%, #cfcfe6 60%, #a2a2b4); }
.sketch-tools .grip { margin-bottom: 20px; }
.sketch-tools .tools button { margin-left: 7px; }
.sketch-tools .tools .grip + button { margin-left: 18px; }
.sketch-tools .rule { margin: -2px 0 0 8px; }
.sketch-tools .tools .rule + button { margin-left: 11px; }
.sketch-tools .tools .rule + button ~ button { margin-left: 12px; }
.sketch-tools .rule:last-child { margin-left: 6px; }

.operations { right: 61px; top: 713px; width: 54px; }
.operations header { padding-left: 12px; background: #f3f2f2; }
.operations .tools { display: flex; flex-direction: column; padding: 6px 4px 0; background: linear-gradient(90deg, #f4f4fa, #cfcfe6 35%, #cfcfe6 75%, #a6a6ba); }
.operations .grip { width: 26px; height: 4px; border: 0; border-top: 2px solid #fff; border-bottom: 2px solid #b0b0c0; margin-bottom: 19px; }
.operations .tools button { position: relative; height: 42px; padding-left: 8px; display: flex; align-items: flex-start; }
.operations .more { right: -1px; bottom: 2px; }

.callout { position: absolute; right: 13px; top: 939px; width: 134px; height: 100px; pointer-events: none; fill: none; stroke: #f93a3a; stroke-width: 3; }

/* Bottom toolbar */
.toolbar {
  flex: none;
  display: flex;
  align-items: center;
  height: 58px;
  padding: 8px 0 0;
  border-bottom: 2px solid #77777c;
  background: linear-gradient(#fff, #f2f2f9 12%, #cfcfe6 35%, #cfcfe6 60%, #a2a2b4);
}
.toolbar .grip { margin: -22px 9px 0 16px; }
.toolbar .grip:first-child { margin-left: 8px; margin-right: 10px; }
.toolbar button { position: relative; flex: none; width: 42px; height: 48px; display: grid; place-items: center; }
.toolbar .wide { width: 44px; }
.toolbar .slim { width: 36px; }
.toolbar button svg:first-child { width: 32px; height: 32px; }
.toolbar .rule { margin: 0 7px 0 3px; }
.toolbar .more { right: -2px; bottom: 2px; }
.formula-f { font: italic 28px "Liberation Serif", serif; }
.formula-x { font: italic 700 16px "Liberation Sans", sans-serif; }
```
